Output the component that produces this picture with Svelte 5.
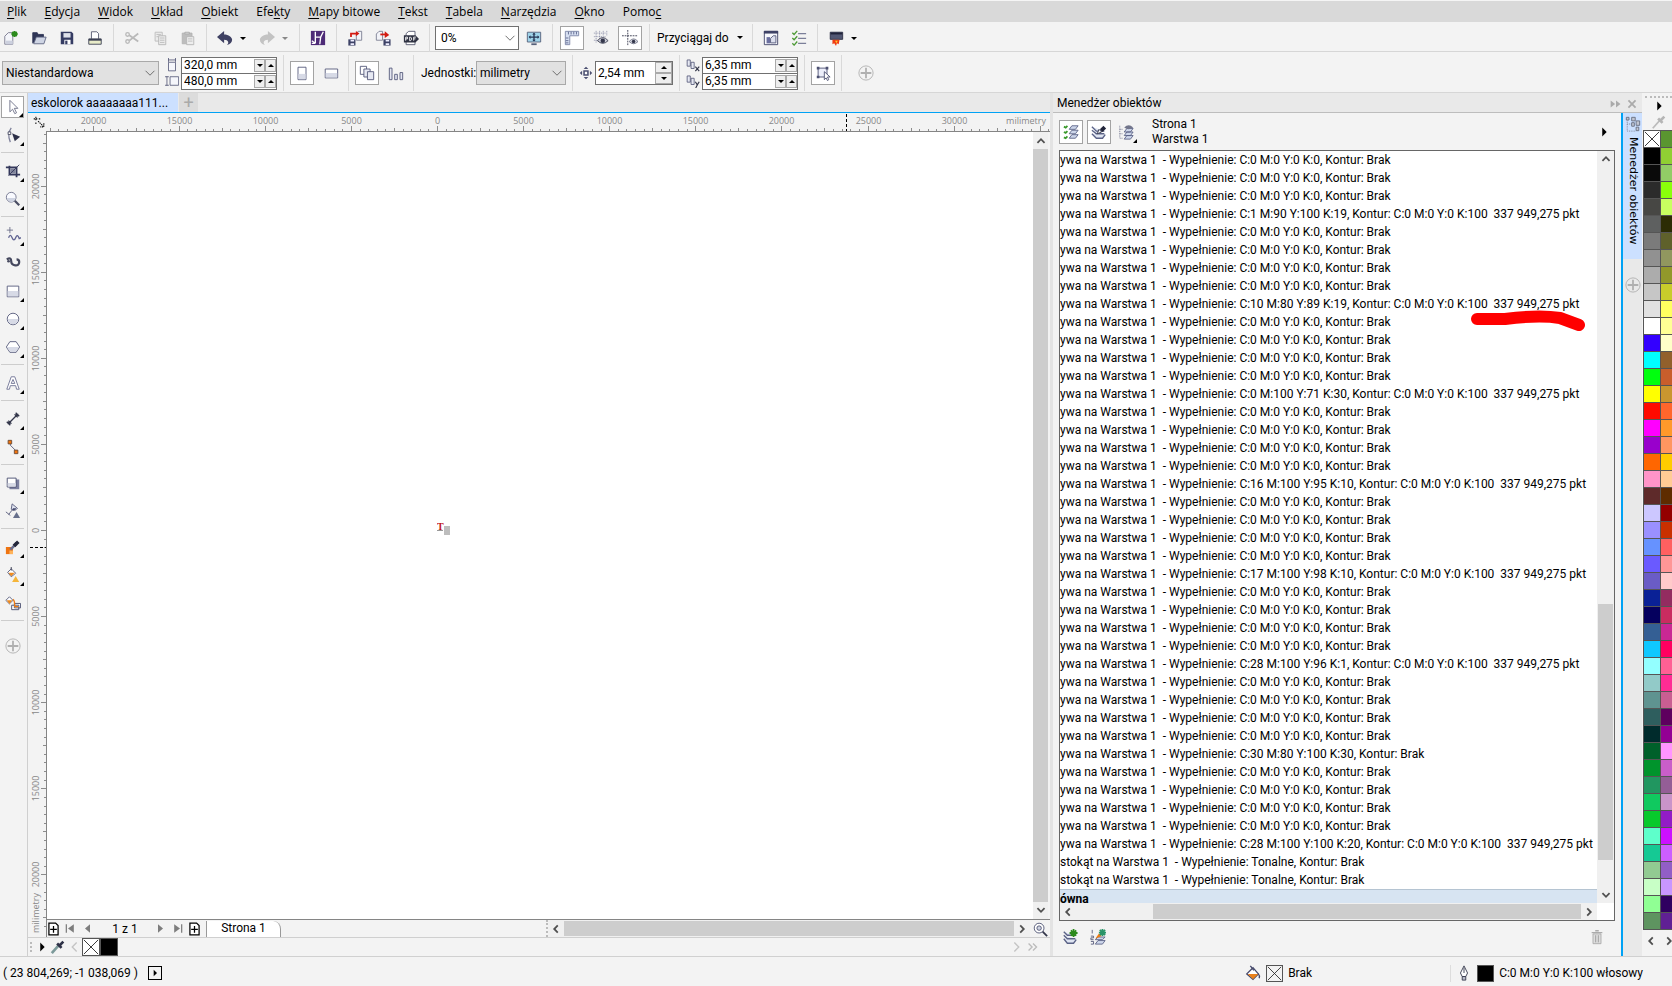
<script>
  // Main menu, the split marks the access key
  const menu = [
    ["", "P", "lik"],
    ["", "E", "dycja"],
    ["", "W", "idok"],
    ["", "U", "kład"],
    ["", "O", "biekt"],
    ["Efe", "k", "ty"],
    ["", "M", "apy bitowe"],
    ["", "T", "ekst"],
    ["", "T", "abela"],
    ["", "N", "arzędzia"],
    ["", "O", "kno"],
    ["Pomo", "c", ""]
  ];

  // Icon drawings on an 18x18 grid
  const icons = {
    new: '<path d="M2 16V7l4-4h5v13z" fill="#f4f5fa" stroke="#77778c"/><path d="M3 12h8v4H3z" fill="#ccd0de"/><path d="M13 1v7M9.5 4.500h7M10.500 2l5 5M15.500 2l-5 5" stroke="#2c8a1c" stroke-width="2"/>',
    open: '<path d="M2 15V3h5l1 2h6v3" fill="#2f3556" stroke="#2f3556"/><path d="M3 15.500L6 8h11l-2.500 7.500z" fill="#cfd5e4" stroke="#5c6380"/>',
    save: '<path d="M2 2h12l2 2v12H2z" fill="#353c63"/><path d="M5 3.500h8v5H5z" fill="#dfe2ec"/><path d="M6 11h7v5H6z" fill="#fff"/><path d="M7 12h2.500v4H7z" fill="#353c63"/>',
    print: '<path d="M5 10V2h6l2 2v6" fill="#fff" stroke="#55586f"/><path d="M2 10h14v6H2z" fill="#e9ecc9" stroke="#3c4055"/><path d="M2 10h14v2H2z" fill="#3c4055"/>',
    cut: '<path d="M16 4L6 12M16 13L6 6" stroke="#b9b9b9" stroke-width="2"/><circle cx="4" cy="5" r="2" fill="none" stroke="#b9b9b9" stroke-width="1.500"/><circle cx="4" cy="13" r="2" fill="none" stroke="#b9b9b9" stroke-width="1.500"/>',
    copy: '<path d="M3.500 2.500h8v10h-8z" fill="#ececec" stroke="#bbb"/><path d="M7.500 6.500h8v10h-8z" fill="#ececec" stroke="#b5b5b5"/><path d="M9 9h5M9 11.500h5M9 14h5M5 5h5M5 7.500h2" stroke="#bbb"/>',
    paste: '<path d="M2.500 3.500h11v12h-11z" fill="#bdbdbd" stroke="#b2b2b2"/><path d="M5.500 2.500h5v2h-5z" fill="#ddd" stroke="#aaa"/><path d="M7.500 7.500h8v9h-8z" fill="#eee" stroke="#b5b5b5"/><path d="M9 10h5M9 12.500h5" stroke="#bbb"/>',
    undo: '<path d="M8 1v4c5 0 9 3 9 6s-2 5-6 6c3-2 2-6-3-6v4L0 8z" fill="#3f4163"/>',
    redo: '<path d="M10 1v4c-5 0-9 3-9 6s2 5 6 6c-3-2-2-6 3-6v4l8-7z" fill="#c3c3c3"/>',
    connect: '<path d="M1 1h16v16H1z" fill="#4d2a77"/><path d="M6 2v6h6l3-6M12 8l-1 8M6 8v7M6 15l-4-3M2 15h4" fill="none" stroke="#fff" stroke-width="1.500"/>',
    import: '<path d="M1.500 10.500h8v7h-8z" fill="#3d4266"/><path d="M4 11h4v2H4zM4 15h4v2H4z" fill="#eef"/><path d="M10.500 11.500v-8l2-2h4v10z" fill="#f2f3f8" stroke="#7b7e92"/><path d="M4.500 8V4h7" fill="none" stroke="#d31b12" stroke-width="2"/><path d="M10 1l4 3-4 3z" fill="#d31b12"/>',
    export: '<path d="M1.500 11.500v-7l3-3h4v10z" fill="#f2f3f8" stroke="#7b7e92"/><path d="M9.500 10.500h8v7h-8z" fill="#3d4266"/><path d="M12 11h4v2h-4zM12 15h4v2h-4z" fill="#eef"/><path d="M6 5h6" stroke="#d31b12" stroke-width="2"/><path d="M11 1.500l5 4-5 3.500z" fill="#d31b12"/>',
    pdf: '<path d="M3.500 7V4l3-2.500h7V7M3.500 13v3.500h10V13" fill="#fff" stroke="#55586f"/><path d="M1 6h13l4 4-4 4H1z" fill="#2f3243"/><path d="M3 12V8h2v2H3M7.500 8v4h1l1-1V9l-1-1zM12 12V8h2.500M12 10h2" fill="none" stroke="#fff"/>',
    fit: '<path d="M1.500 2.500h15v11h-15z" fill="#9fd4ea" stroke="#55607a"/><path d="M6 16h6" stroke="#55607a" stroke-width="2"/><path d="M4 8h10M9 4v8" stroke="#263352" stroke-width="1.500"/><path d="M3 8l2-2v4zM15 8l-2-2v4zM9 3L7 5h4zM9 13l-2-2h4z" fill="#263352"/>',
    rulers: '<path d="M1.500 1.500h15v5h-10v10h-5z" fill="#d7e0f2" stroke="#7b84a5"/><path d="M5 2v3M8 2v3M11 2v3M14 2v3M2 9h3M2 12h3M2 14.500h3" stroke="#59628a"/>',
    grid: '<path d="M1 3.500h14M1 7.500h14M1 11.500h6M3.500 1v14M7.500 1v10M11.500 1v6M15.500 1v6" stroke="#8285a0" stroke-dasharray="1 1"/><path d="M5 12q6-7 12 0-6 6-12 0z" fill="#c9cbd6" stroke="#3e4052"/><circle cx="11" cy="12" r="2.500" fill="#33364a"/>',
    guides: '<path d="M0 6.500h18M6.500 0v18" stroke="#33364a" stroke-dasharray="2 1"/><path d="M8 13q5-6 10 0-5 5-10 0z" fill="#d5d7e0" stroke="#73768a"/><circle cx="13" cy="13" r="2" fill="#33364a"/>',
    options: '<path d="M1.500 1.500h15v15h-15z" fill="#f7f8fc" stroke="#3e4266"/><path d="M1 1h16v3H1z" fill="#3e4266"/><path d="M4 8h4v7H4z" fill="#6b6fa0"/><path d="M8.500 14.500v-5l3-3h3v8z" fill="#dde0ef" stroke="#55597a"/>',
    list: '<path d="M8 4h9M8 9.500h9M8 15h9" stroke="#7b7f99" stroke-width="1.500"/><path d="M1.500 3l2 2L7 1M1.500 9l2 2L7 7M1.500 15l2 2L7 13" fill="none" stroke="#4c9a35" stroke-width="1.500"/>',
    launch: '<path d="M2.500 2.500h14v8h-14z" fill="#525773" stroke="#2b2e44"/><path d="M3 3h13v2H3z" fill="#20233a"/><path d="M5 11l8 0-1 5-2-1-1 3-2-3-2 1z" fill="#f03c12"/><path d="M8 12h3l-1.500 3z" fill="#ffc62e"/>',
    width: '<path d="M4.500 5.500h9v11h-9z" fill="#f5f6fb" stroke="#4c5071"/><path d="M4 2.500h10M4.500 0v5M13.500 0v5" stroke="#4c5071"/>',
    height: '<path d="M6.500 3.500h11v11h-11z" fill="#f5f6fb" stroke="#4c5071"/><path d="M2.500 3v12M0 3.500h5M0 14.500h5" stroke="#4c5071"/>',
    portrait: '<path d="M4.500 2.500h9v14h-9z" fill="#fff" stroke="#55597a"/><path d="M5 10h8v6H5z" fill="#d7dae6"/>',
    landscape: '<path d="M2.500 4.500h14v10h-14z" fill="#fff" stroke="#55597a"/><path d="M3 9h13v5H3z" fill="#d7dae6"/>',
    pages: '<path d="M1.500 1.500h7v9h-7z" fill="#fff" stroke="#55597a"/><path d="M5.500 4.500h7v9h-7z" fill="#e7e9f3" stroke="#55597a"/><path d="M9.500 7.500h7v9h-7z" fill="#e7e9f3" stroke="#55597a"/>',
    bars: '<path d="M1.500 3.500h3v13h-3zM7.500 10.500h3v6h-3zM13.500 8.500h3v8h-3z" fill="#e4e6f1" stroke="#55597a"/>',
    nudge: '<path d="M6.500 6.500h5v5h-5z" fill="#fff" stroke="#4c5071" stroke-width="2"/><path d="M9 1l3 3H6zM9 17l3-3H6zM1 9l3-3v6zM17 9l-3-3v6z" fill="#4c5071"/>',
    dupX: '<path d="M1.500 2.500h4v8h-4zM6.500 5.500h4v8h-4z" fill="#e7e9f3" stroke="#4c5071"/><path d="M12 11l5 6M17 11l-5 6" stroke="#33364a" stroke-width="1.500"/>',
    dupY: '<path d="M1.500 2.500h4v8h-4zM6.500 5.500h4v8h-4z" fill="#e7e9f3" stroke="#4c5071"/><path d="M12 10l2.500 4L17 10M14.500 14l-2 4" fill="none" stroke="#33364a" stroke-width="1.500"/>',
    treat: '<path d="M3.500 3.500h10v10h-10z" fill="#eceefa" stroke="#4c5071"/><path d="M2 2h3v3H2zM12 2h3v3h-3zM2 12h3v3H2z" fill="#4c5071"/><path d="M10.500 7.500v9l2-2 1.500 3 1.500-1-1.500-3h3z" fill="#fff" stroke="#4c5071"/>',
    plus: '<circle cx="9" cy="9" r="8" fill="none" stroke="#b0b0b0"/><path d="M9 3v12M3 9h12" stroke="#b0b0b0" stroke-width="2"/>',
    pick: '<path d="M5.500 1.500v13l3-3 2.500 5 2-1-2.500-5h4z" fill="#fff" stroke="#6a6d85"/>',
    shape: '<path d="M7 1Q2 8 6 17" fill="none" stroke="#7f829b" stroke-width="1.500"/><path d="M3.500 5.500h3v3h-3z" fill="#fff" stroke="#44475e"/><path d="M8 7l9 4-6 5z" fill="#2d3048"/>',
    crop: '<path d="M5 3v10h12M1 5h12v11" fill="none" stroke="#33375a" stroke-width="2"/><path d="M6 6h6v6H6z" fill="#7d8199"/><path d="M4 14L16 2" stroke="#33375a"/>',
    zoom: '<circle cx="7" cy="7" r="5.500" fill="#f9faff" stroke="#6c708a"/><path d="M2 8h10q-2 5-5 4.500T2 8z" fill="#cfd4e2"/><path d="M11 11l5 5" stroke="#4a4d63" stroke-width="2.500"/>',
    freehand: '<path d="M5.500 0v7M2 3.500h7" stroke="#6c708a"/><path d="M4 12q2-5 4 0t4 0 4 1l2-1" fill="none" stroke="#5f6391" stroke-width="1.500"/>',
    artistic: '<path d="M2 5q5-3 5 2c0 5 9 7 9 1q0-3-3-3" fill="none" stroke="#45485e" stroke-width="2.500"/><circle cx="4" cy="7" r="1.500" fill="#45485e"/>',
    rect: '<path d="M2.500 3.500h13v12h-13z" fill="#fff" stroke="#55597a"/><path d="M3 9h12v6H3z" fill="#d7dae6"/>',
    ellipse: '<circle cx="9" cy="9" r="6.500" fill="#fff" stroke="#55597a"/><path d="M3 9h12q-1 6-6 6T3 9z" fill="#d7dae6"/>',
    polygon: '<path d="M5.500 3h7l4 6-4 6h-7l-4-6z" fill="#fff" stroke="#55597a"/><path d="M2 9h14l-4 5.500H6z" fill="#d7dae6"/>',
    text: '<path d="M2 16L7 2h4l5 14h-3l-1-4H6l-1 4z" fill="#fff" stroke="#6d7193"/><path d="M7 9.500L9 5l2 4.500z" fill="#fff" stroke="#6d7193"/>',
    dimension: '<path d="M4 14L14 4M2 12l4 4M12 2l4 4" stroke="#33364a" stroke-width="1.500"/><path d="M3 15l1-5 4 4zM15 3l-1 5-4-4z" fill="#33364a"/>',
    connector: '<path d="M6 4v3l6 6v2" fill="none" stroke="#55597a"/><path d="M3.500 1.500h4v4h-4zM10.500 12.500h4v4h-4z" fill="#f2740b" stroke="#684a3a"/>',
    shadow: '<path d="M5 5h11v11H5z" fill="#7c80a0"/><path d="M2.500 3.500h10v10h-10z" fill="#fff" stroke="#44486b"/><path d="M3 9h9v4H3z" fill="#d7dae6"/>',
    transparency: '<path d="M8 1l6 5q-3 4-7 1zM8 8l-4 5M1 10l5 4" fill="#dfe3f0" stroke="#55597a"/><path d="M9 6h4q-2 3-5 2z" fill="#44486b"/><path d="M13 10l4 7H9z" fill="#67708c"/>',
    dropper: '<path d="M1 9h8v8H1z" fill="#ef7411"/><path d="M1 13h4v4h4v-4" fill="#ffb35a"/><path d="M6 12l6-6" stroke="#6c6f8e" stroke-width="3"/><path d="M10 5l3 3M12 6l3-3" stroke="#25283c" stroke-width="4"/>',
    fill: '<path d="M3 6l4-4 5 5-5 4z" fill="#fff" stroke="#55597a"/><path d="M4 6.500h7l-4 4z" fill="#ee8a1d"/><path d="M7 0v4" stroke="#33364a"/><path d="M12 10l4 7H8z" fill="#f5b53a"/>',
    smart: '<path d="M1 6l4-4 4 4-4 4z" fill="#fff" stroke="#55597a"/><path d="M2 6h6l-3 4z" fill="#ee8a1d"/><path d="M10.500 9.500h7v5h-7zM7.500 11.500h8v5h-8z" fill="#fff" stroke="#44486b"/><path d="M9 5q2 1 2 8h4" fill="none" stroke="#ee7a11" stroke-width="1.500"/>',
    layersCheck: '<path d="M10 2h7l-3 4H7zM10 7h7l-3 4H7zM10 12h7l-3 4H7z" fill="#cdd6ea" stroke="#5a6286"/><path d="M1 3l2 1 2-2M1 9l2 1 2-2M1 15l2 1 2-2" fill="none" stroke="#3b9a2c" stroke-width="2"/>',
    layersEdit: '<path d="M1 3l5 5h9M1 7l5 4h9M1 11l5 5h7l3-4" fill="#dfe5f2" stroke="#5a6286" stroke-width="1.500"/><path d="M7 11l2-5 3 3z" fill="#fff" stroke="#33364a"/><path d="M10 6l4-4 3 3-4 4z" fill="#22253a"/>',
    layersView: '<path d="M2 2v14h4M2 6h4M2 11h4" fill="none" stroke="#6a6e88" stroke-dasharray="1 1"/><path d="M10 5h7l-3 4H7zM10 9h7l-3 4H7zM10 13h7l-3 4H7z" fill="#cdd6ea" stroke="#5a6286"/><path d="M7 4q5-5 10 0-5 4-10 0z" fill="#72758b"/>',
    layerNew: '<path d="M2 3l4 4h9M2 7l4 4h9M2 11l4 5h7l3-4" fill="#dfe5f2" stroke="#5a6286" stroke-width="1.500"/><path d="M13 0v9M8.500 4.500h9M10 1.500l6 6M16 1.500l-6 6" stroke="#2c8a1c" stroke-width="2"/>',
    layerMaster: '<path d="M9 9h8l-3 3H6zM9 13h8l-3 4H6z" fill="#cdd6ea" stroke="#5a6286"/><path d="M2.500 1v4M1 8h3v2H1v2h3M1 14h3v3H1" fill="none" stroke="#55597a"/><path d="M6 11l4-6 3 3z" fill="#ee7a11"/><path d="M14 0v8M10 4h8M11 1l6 6M17 1l-6 6" stroke="#2a9468" stroke-width="2"/>',
    trash: '<path d="M4.500 5.500h9v11h-9z" fill="#ddd" stroke="#aaa"/><path d="M3 4h12M7 2h4" stroke="#aaa" stroke-width="1.500"/><path d="M7.500 7v8M10.500 7v8" stroke="#999"/>',
    pipette: '<path d="M2 16l8-9" stroke="#7c9a9a" stroke-width="3"/><path d="M8 5l5 5M11 7l4-4" stroke="#2e3147" stroke-width="3"/>',
    pipetteOff: '<path d="M2 16l8-9" stroke="#bbb" stroke-width="2"/><path d="M8 5l5 5M11 7l4-4" stroke="#b5b5b5" stroke-width="3"/>',
    tree: '<path d="M2.500 5v12h9M2.500 9h5" fill="none" stroke="#777d92" stroke-dasharray="1 1"/><path d="M1.500 1.500h3v3h-3zM7.500 1.500h4v4h-4zM12.500 5.500h4v5h-4zM7.500 7.500h3v4h-3zM12.500 12.500h3v4h-3z" fill="#c2c6d2" stroke="#666c80"/>',
    bucket: '<path d="M2 10l7-7 6 7-6 6z" fill="#fff" stroke="#44486b" stroke-width="1.500"/><path d="M3 10h12l-6 6z" fill="#e9811c"/><path d="M6 1l4 5M15 10q2 2 1 5" fill="none" stroke="#44486b" stroke-width="1.500"/>',
    pen: '<path d="M9 1l4 8-2 4H7L5 9z" fill="#fff" stroke="#33364a"/><path d="M9 3v6M7 13h4v4H7z" fill="#b9bcc9" stroke="#33364a"/>',
    pageAdd: '<path d="M3.500 2.500h8l3 3v11h-11z" fill="#fff" stroke="#000" stroke-width="1.500"/><path d="M9 6v8M5 10h8" stroke="#000" stroke-width="1.500"/>',
    first: '<path d="M4 4v10" stroke="#7d7d7d" stroke-width="1.500"/><path d="M13 4v10L6 9z" fill="#7d7d7d"/>',
    prev: '<path d="M12 4v10L6 9z" fill="#7d7d7d"/>',
    next: '<path d="M6 4v10l6-5z" fill="#7d7d7d"/>',
    last: '<path d="M14 4v10" stroke="#7d7d7d" stroke-width="1.500"/><path d="M5 4v10l7-5z" fill="#7d7d7d"/>',
    navigator: '<circle cx="8" cy="8" r="5.500" fill="#fff" stroke="#4c5071"/><circle cx="8" cy="8" r="2.500" fill="#cfd4e2" stroke="#4c5071"/><path d="M12 12l5 5" stroke="#33364a" stroke-width="2"/>',
    up: '<path d="M5 11l4-4 4 4" fill="none" stroke="#505050" stroke-width="2"/>',
    down: '<path d="M5 7l4 4 4-4" fill="none" stroke="#505050" stroke-width="2"/>',
    left: '<path d="M11 5L7 9l4 4" fill="none" stroke="#505050" stroke-width="2"/>',
    right: '<path d="M7 5l4 4-4 4" fill="none" stroke="#505050" stroke-width="2"/>',
    leftOff: '<path d="M12 4L7 9l5 5" fill="none" stroke="#c4c4c4" stroke-width="1.500"/>',
    rightOff: '<path d="M6 4l5 5-5 5" fill="none" stroke="#c4c4c4" stroke-width="1.500"/>',
    endOff: '<path d="M4 5l4 4-4 4M9 5l4 4-4 4" fill="none" stroke="#bbb" stroke-width="1.500"/>',
    play: '<path d="M7 4v10l5-5z" fill="#000"/>',
    forward: '<path d="M3 5v8l5-4zM9 5v8l5-4z" fill="#aaa"/>',
    close: '<path d="M5 5l8 8M13 5l-8 8" stroke="#aaa" stroke-width="2"/>',
    origin: '<path d="M1 4h5M4 1v6M8 4h3M4 9v3M7 7l8 8M15 10v5h-5" fill="none" stroke="#111" stroke-width="1.500" stroke-dasharray="2 1"/>',
    chevron: '<path d="M4 6.500l5 5 5-5" fill="none" stroke="#606060"/>',
    noColor: '<path d="M1 1l16 16M17 1L1 17" stroke="#222"/>'
  };

  const standardTools = [
    { icon: "new", label: "Nowy" },
    { icon: "open", label: "Otwórz" },
    { icon: "save", label: "Zapisz" },
    { icon: "print", label: "Drukuj" },
    { sep: true },
    { icon: "cut", label: "Wytnij" },
    { icon: "copy", label: "Kopiuj" },
    { icon: "paste", label: "Wklej" },
    { sep: true },
    { icon: "undo", label: "Cofnij" },
    { caret: true },
    { icon: "redo", label: "Ponów" },
    { caret: true, off: true },
    { sep: true },
    { icon: "connect", label: "Zawartość" },
    { sep: true },
    { icon: "import", label: "Importuj" },
    { icon: "export", label: "Eksportuj" },
    { icon: "pdf", label: "Publikuj" },
    { sep: true }
  ];

  const viewTools = [
    { icon: "fit", label: "Pełny ekran" },
    { sep: true },
    { icon: "rulers", label: "Linijki", on: true },
    { icon: "grid", label: "Siatka" },
    { icon: "guides", label: "Prowadnice", on: true },
    { sep: true }
  ];

  const endTools = [
    { sep: true },
    { icon: "options", label: "Ekran" },
    { icon: "list", label: "Opcje" },
    { sep: true },
    { icon: "launch", label: "Uruchom" },
    { caret: true }
  ];

  const toolbox = [
    { icon: "pick", on: true, more: true },
    { icon: "shape", more: true },
    null,
    { icon: "crop", more: true },
    { icon: "zoom", more: true },
    null,
    { icon: "freehand", more: true },
    { icon: "artistic" },
    { icon: "rect", more: true },
    { icon: "ellipse", more: true },
    { icon: "polygon", more: true },
    null,
    { icon: "text", more: true },
    null,
    { icon: "dimension", more: true },
    { icon: "connector", more: true },
    null,
    { icon: "shadow", more: true },
    { icon: "transparency" },
    null,
    { icon: "dropper", more: true },
    { icon: "fill", more: true },
    { icon: "smart" },
    null
  ];

  // Objects on the layer; rows not listed here have a plain white fill
  const outline = "C:0 M:0 Y:0 K:100  337 949,275 pkt";
  const special = {
    3: ["C:1 M:90 Y:100 K:19", outline],
    8: ["C:10 M:80 Y:89 K:19", outline],
    13: ["C:0 M:100 Y:71 K:30", outline],
    18: ["C:16 M:100 Y:95 K:10", outline],
    23: ["C:17 M:100 Y:98 K:10", outline],
    28: ["C:28 M:100 Y:96 K:1", outline],
    33: ["C:30 M:80 Y:100 K:30", "Brak"],
    38: ["C:28 M:100 Y:100 K:20", outline]
  };

  const objects = Array.from({ length: 41 }, (_, i) => {
    const [fill, stroke] = special[i] ?? [i > 38 ? "Tonalne" : "C:0 M:0 Y:0 K:0", "Brak"];
    const name = i > 38 ? "stokąt" : "ywa";
    return `${name} na Warstwa 1  - Wypełnienie: ${fill}, Kontur: ${stroke}`;
  });

  const leftColors =
    "fff 000 0a0a0a 2b2b2b 474744 5e6060 7b7b7b 919191 acacac c6c6c6 e1e1e1 fff 3300ff 00ffff 00ff0e ffff00 ff0a00 ff00ff 9900cc ff6600 ff94c8 5e2a2a ccc7ff 9a90ff 6692ff 6a5aff 6a5cc6 0a2196 05005e 345f94 0fc8ff 93ffff 92cac8 5f9390 2e5e5e 002b2c 00602a 00942c 219660 10c95f 08c92c 5effcb 15c994 92ca92 c8ffc6 90ff94 5e9460".split(" ");
  const rightColors =
    "5a9630 90cf33 92cc66 8aff0a c8ff60 2c2c04 5f612b 91975f 92982b c8cc2b ffff60 ffff94 ffffc8 92602c c85e2c c9962f ff662c ff992a ff9660 ffcc00 ffcb94 5e2c00 930000 c93000 ff6060 ff9696 ffcaca 932c60 c92c60 c92894 ff0060 ff6094 ff2c94 c95e92 5e005e 930094 ff94ff c95ec9 945e96 c994c9 921cc6 cc10ff cc5eff 925ec6 c896ff 2f0060 602094".split(" ");

  // Ruler marks, one every 500 mm
  const step = 8.61;
  const makeTicks = (zero, from, to) => {
    const ticks = [];
    for (let i = from; i <= to; i++) {
      ticks.push({
        pos: Math.round(zero + i * step) + 0.5,
        size: i % 10 === 0 ? 5 : i % 5 === 0 ? 3 : 2,
        label: i % 10 === 0 ? String(Math.abs(i) * 500) : ""
      });
    }
    return ticks;
  };
  const ticksX = makeTicks(391, -45, 72);
  const ticksY = makeTicks(398, -46, 46);

  let pageWidth = $state("320,0 mm");
  let pageHeight = $state("480,0 mm");
  let nudge = $state("2,54 mm");
  let dupX = $state("6,35 mm");
  let dupY = $state("6,35 mm");
</script>

{#snippet icon(name)}
  <svg class="icon" viewBox="0 0 18 18" aria-hidden="true">{@html icons[name]}</svg>
{/snippet}

{#snippet tools(items)}
  {#each items as item}
    {#if item.sep}
      <span class="sep"></span>
    {:else if item.caret}
      <button class="caret-button" class:off={item.off} aria-label="Więcej"><span class="caret"></span></button>
    {:else}
      <button class="tool" class:on={item.on} aria-label={item.label}>{@render icon(item.icon)}</button>
    {/if}
  {/each}
{/snippet}

{#snippet sideSteps()}
  <span class="steps">
    <button aria-label="Mniej"><span class="caret small"></span></button>
    <button aria-label="Więcej"><span class="caret small up"></span></button>
  </span>
{/snippet}

<div class="app">
  <nav class="menu">
    {#each menu as [before, key, after]}
      <button>{before}<u>{key}</u>{after}</button>
    {/each}
  </nav>

  <div class="toolbar standard">
    {@render tools(standardTools)}
    <span class="combo zoom-level">
      <select aria-label="Powiększenie"><option>0%</option></select>
      {@render icon("chevron")}
    </span>
    {@render tools(viewTools)}
    <button class="snap">Przyciągaj do <span class="caret"></span></button>
    {@render tools(endTools)}
  </div>

  <div class="toolbar property">
    <span class="combo preset">
      <select aria-label="Rozmiar strony"><option>Niestandardowa</option></select>
      {@render icon("chevron")}
    </span>
    <div class="pair-icons">{@render icon("width")}{@render icon("height")}</div>
    <div class="pair">
      <div><input aria-label="Szerokość" bind:value={pageWidth} />{@render sideSteps()}</div>
      <div><input aria-label="Wysokość" bind:value={pageHeight} />{@render sideSteps()}</div>
    </div>
    <span class="sep"></span>
    <button class="tool on" aria-label="Pionowo">{@render icon("portrait")}</button>
    <button class="tool" aria-label="Poziomo">{@render icon("landscape")}</button>
    <span class="sep"></span>
    <button class="tool on" aria-label="Wszystkie strony">{@render icon("pages")}</button>
    <button class="tool" aria-label="Bieżąca strona">{@render icon("bars")}</button>
    <span class="sep"></span>
    <label class="units" for="units">Jednostki:</label>
    <span class="combo unit">
      <select id="units"><option>milimetry</option></select>
      {@render icon("chevron")}
    </span>
    <span class="sep"></span>
    <div class="pair-icons">{@render icon("nudge")}</div>
    <div class="spinner">
      <input aria-label="Odległość przesunięcia" bind:value={nudge} />
      <span class="stack">
        <button aria-label="Więcej"><span class="caret small up"></span></button>
        <button aria-label="Mniej"><span class="caret small"></span></button>
      </span>
    </div>
    <span class="sep"></span>
    <div class="pair-icons">{@render icon("dupX")}{@render icon("dupY")}</div>
    <div class="pair">
      <div><input aria-label="Odległość X" bind:value={dupX} />{@render sideSteps()}</div>
      <div><input aria-label="Odległość Y" bind:value={dupY} />{@render sideSteps()}</div>
    </div>
    <span class="sep"></span>
    <button class="tool on" aria-label="Traktuj jako wypełnione">{@render icon("treat")}</button>
    <span class="sep"></span>
    <button class="tool customize" aria-label="Dostosuj">{@render icon("plus")}</button>
  </div>

  <div class="workspace">
    <div class="toolbox">
      {#each toolbox as tool}
        {#if tool}
          <button class="tool" class:on={tool.on} class:more={tool.more} aria-label={tool.icon}>
            {@render icon(tool.icon)}
          </button>
        {:else}
          <span class="line"></span>
        {/if}
      {/each}
      <button class="tool add" aria-label="Dostosuj">{@render icon("plus")}</button>
    </div>

    <main class="document">
      <div class="doc-tabs">
        <button class="doc-tab">eskolorok aaaaaaaa111...</button>
        <button class="doc-new" aria-label="Nowy dokument">+</button>
      </div>

      <div class="view">
        <div class="corner">{@render icon("origin")}</div>
        <svg class="ruler-x">
          {#each ticksX as tick}
            <path d="M{tick.pos} {18 - tick.size}v{tick.size}" />
            {#if tick.label && tick.label !== "35000"}
              <text x={tick.pos} y="11" text-anchor="middle">{tick.label}</text>
            {/if}
          {/each}
          <text x="100%" dx="-4" y="11" text-anchor="end">milimetry</text>
          <path class="pointer" d="M800.5 1v18" />
        </svg>
        <svg class="ruler-y">
          {#each ticksY as tick}
            <path d="M{18 - tick.size} {tick.pos}h{tick.size}" />
            {#if tick.label}
              <text transform="translate(11 {tick.pos}) rotate(-90)" text-anchor="middle">{tick.label}</text>
            {/if}
          {/each}
          <svg y="100%" overflow="visible">
            <text transform="translate(11 -4) rotate(-90)">milimetry</text>
          </svg>
          <path class="pointer" d="M2 415.5h16" />
        </svg>

        <div class="canvas">
          <svg class="artwork" viewBox="0 0 14 14">
            <path d="M7 5h6v9H7z" fill="#bdbdbd" />
            <path d="M0 9.500h6" stroke="#999" />
            <text x="0" y="9">T</text>
          </svg>
        </div>
        <div class="scroll-y">
          {@render icon("up")}
          <div class="thumb"></div>
          {@render icon("down")}
        </div>

        <div class="pages">
          <div class="page-nav">
            <button aria-label="Dodaj stronę">{@render icon("pageAdd")}</button>
            <button aria-label="Pierwsza strona">{@render icon("first")}</button>
            <button aria-label="Poprzednia strona">{@render icon("prev")}</button>
            <span class="count">1 z 1</span>
            <button aria-label="Następna strona">{@render icon("next")}</button>
            <button aria-label="Ostatnia strona">{@render icon("last")}</button>
            <button aria-label="Dodaj stronę na końcu">{@render icon("pageAdd")}</button>
            <button class="page-tab">Strona 1</button>
          </div>
          <div class="scroll-x">
            {@render icon("left")}
            <div class="thumb"></div>
            {@render icon("right")}
          </div>
          <button class="navigator" aria-label="Nawigator">{@render icon("navigator")}</button>
        </div>
      </div>

      <div class="doc-palette">
        <span class="grip"></span>
        {@render icon("play")}
        {@render icon("pipette")}
        {@render icon("leftOff")}
        <span class="swatches">
          <button class="swatch" aria-label="Brak koloru">{@render icon("noColor")}</button>
          <button class="swatch black" aria-label="Czarny"></button>
        </span>
        <span class="spacer"></span>
        {@render icon("rightOff")}
        {@render icon("endOff")}
      </div>
    </main>

    <aside class="docker">
      <header class="docker-title">
        <span>Menedżer obiektów</span>
        <button aria-label="Zwiń">{@render icon("forward")}</button>
        <button aria-label="Zamknij">{@render icon("close")}</button>
      </header>
      <div class="docker-body">
        <section class="manager">
          <div class="manager-head">
            <button class="tool on" aria-label="Pokaż właściwości">{@render icon("layersCheck")}</button>
            <button class="tool on" aria-label="Edytuj warstwy">{@render icon("layersEdit")}</button>
            <button class="tool more" aria-label="Widok warstw">{@render icon("layersView")}</button>
            <div class="active-layer">
              <div>Strona 1</div>
              <div>Warstwa 1</div>
            </div>
            <button class="tool" aria-label="Opcje">{@render icon("play")}</button>
          </div>

          <div class="object-list">
            <ul>
              {#each objects as object, i}
                <li>
                  {object}
                  {#if i === 8}
                    <svg class="mark" viewBox="0 0 120 26">
                      <path d="M9 10h28C60 7 80 7 92 9L111 16" />
                    </svg>
                  {/if}
                </li>
              {/each}
              <li class="master">ówna</li>
            </ul>
            <div class="scroll-y">
              {@render icon("up")}
              <div class="thumb"></div>
              {@render icon("down")}
            </div>
            <div class="scroll-x">
              {@render icon("left")}
              <div class="thumb"></div>
              {@render icon("right")}
            </div>
          </div>

          <div class="manager-foot">
            <button class="tool" aria-label="Nowa warstwa">{@render icon("layerNew")}</button>
            <button class="tool" aria-label="Nowa warstwa główna">{@render icon("layerMaster")}</button>
            <span class="spacer"></span>
            <button class="tool" aria-label="Usuń">{@render icon("trash")}</button>
          </div>
        </section>

        <div class="docker-tabs">
          <button class="docker-tab">{@render icon("tree")}<span>Menedżer obiektów</span></button>
          <button class="tool" aria-label="Dodaj okno">{@render icon("plus")}</button>
        </div>
      </div>
    </aside>

    <div class="palette">
      <span class="palette-grip"></span>
      {@render icon("play")}
      {@render icon("pipetteOff")}
      <div class="columns">
        <div class="column">
          {#each leftColors as color, i}
            <button style="background: #{color}" aria-label="#{color}">
              {#if i === 0}{@render icon("noColor")}{/if}
            </button>
          {/each}
        </div>
        <div class="column">
          {#each rightColors as color}
            <button style="background: #{color}" aria-label="#{color}"></button>
          {/each}
        </div>
      </div>
      <div class="palette-nav">{@render icon("left")}{@render icon("right")}</div>
    </div>
  </div>

  <footer class="status">
    <span class="coords">( 23 804,269; -1 038,069 )</span>
    <button class="status-play" aria-label="Szczegóły">{@render icon("play")}</button>
    <div class="status-fill">
      {@render icon("bucket")}
      <span class="chip">{@render icon("noColor")}</span>
      <span>Brak</span>
    </div>
    <div class="status-outline">
      {@render icon("pen")}
      <span class="chip black"></span>
      <span>C:0 M:0 Y:0 K:100 włosowy</span>
    </div>
  </footer>
</div>

<style>
  :global(body) {
    margin: 0;
  }

  .app {
    display: flex;
    flex-direction: column;
    height: 100vh;
    overflow: hidden;
    background: #f3f3f3;
    color: #000;
    font: 12px/16px Roboto, "Open Sans", sans-serif;
  }

  .app * {
    box-sizing: border-box;
  }

  button,
  input,
  select {
    margin: 0;
    padding: 0;
    border: 0;
    background: none;
    color: inherit;
    font: inherit;
  }

  .icon {
    display: block;
    flex: none;
    width: 16px;
    height: 16px;
    fill: none;
  }

  .spacer {
    flex: 1;
  }

  .caret {
    display: inline-block;
    border: 3px solid transparent;
    border-top-color: #000;
    border-bottom: 0;
  }

  .caret.up {
    border-top: 0;
    border-bottom: 3px solid #000;
  }

  .off .caret {
    border-top-color: #888;
  }

  /* Menu and toolbars */
  .menu {
    display: flex;
    flex: none;
    height: 22px;
    border-top: 1px solid #f5f5f5;
    background: #d9d9d9;
    font-family: "Open Sans", "Noto Sans", sans-serif;
  }

  .menu button {
    padding: 0 9px;
  }

  .menu button:first-child {
    padding-left: 7px;
  }

  .menu u {
    text-underline-offset: 2px;
  }

  .toolbar {
    display: flex;
    flex: none;
    align-items: center;
    gap: 6px;
    padding-top: 2px;
    border-bottom: 1px solid #d6d6d6;
  }

  .standard {
    height: 30px;
  }

  .property {
    height: 41px;
    padding-left: 2px;
  }

  .tool {
    display: flex;
    flex: none;
    align-items: center;
    justify-content: center;
    width: 22px;
    height: 22px;
  }

  .tool.on {
    width: 24px;
    height: 24px;
    border: 1px solid #a3a3a3;
    background: #fff;
  }

  .caret-button {
    width: 14px;
    height: 22px;
    margin-left: -6px;
    line-height: 0;
  }

  .sep {
    flex: none;
    width: 1px;
    height: 28px;
    margin: 0 1px;
    background: #d9d9d9;
  }

  .property .sep {
    height: 36px;
    margin: 0;
  }

  .combo {
    position: relative;
    flex: none;
    height: 24px;
  }

  .combo select {
    width: 100%;
    height: 100%;
    padding-left: 3px;
    border: 1px solid #a9a9a9;
    border-radius: 0;
    appearance: none;
    background: #e1e1e1;
  }

  .combo .icon {
    position: absolute;
    top: 4px;
    right: 1px;
    pointer-events: none;
  }

  .zoom-level {
    width: 84px;
    margin: 0 -2px;
  }

  .zoom-level select {
    padding-left: 5px;
    border-color: #707070;
    background: #fff;
  }

  .snap {
    display: flex;
    align-items: center;
    gap: 8px;
    width: 88px;
    white-space: nowrap;
  }

  .preset {
    width: 157px;
  }

  .unit {
    width: 90px;
    margin-left: -4px;
  }

  .units {
    width: 54px;
    padding-left: 1px;
    white-space: nowrap;
  }

  .pair-icons {
    display: flex;
    flex-direction: column;
    gap: 2px;
  }

  .pair-icons .icon {
    width: 14px;
    height: 14px;
  }

  .pair {
    width: 96px;
    margin-left: -4px;
    border: 1px solid #707070;
    background: #fff;
  }

  .pair > div {
    display: flex;
    align-items: center;
    height: 15px;
  }

  .pair > div + div {
    height: 16px;
    border-top: 1px solid #707070;
  }

  .pair input {
    width: 72px;
    height: 15px;
    padding-left: 2px;
  }

  .steps {
    display: flex;
  }

  .steps button,
  .stack button {
    display: flex;
    align-items: center;
    justify-content: center;
    width: 11px;
    height: 13px;
    border: 1px solid #aaa;
    background: #eee;
  }

  .spinner {
    display: flex;
    width: 78px;
    height: 24px;
    margin-left: -4px;
    border: 1px solid #707070;
    background: #fff;
  }

  .spinner input {
    flex: 1;
    width: 0;
    padding-left: 2px;
  }

  .stack button {
    width: 17px;
    height: 11px;
  }

  .customize {
    margin-left: 7px;
  }

  /* Toolbox */
  .workspace {
    display: flex;
    flex: 1;
    min-height: 0;
  }

  .toolbox {
    display: flex;
    flex: none;
    flex-direction: column;
    align-items: center;
    gap: 6px;
    width: 28px;
    padding: 3px 2px 0 0;
    border-right: 1px solid #cfcfcf;
  }

  .toolbox .tool {
    width: 23px;
    height: 22px;
  }

  .toolbox .line {
    flex: none;
    width: 23px;
    height: 1px;
    margin: 0 0 1px;
    background: #cdcdcd;
  }

  .toolbox .add {
    margin-top: 7px;
  }

  .more {
    position: relative;
  }

  .more::after {
    content: "";
    position: absolute;
    right: 0;
    bottom: 0;
    border: 2px solid #000;
    border-top-color: transparent;
    border-left-color: transparent;
  }

  /* Document window */
  .document {
    display: flex;
    flex: 1;
    flex-direction: column;
    min-width: 0;
  }

  .doc-tabs {
    display: flex;
    flex: none;
    gap: 1px;
    height: 20px;
    border-bottom: 1px solid #00a2f5;
    background: #e9e9e9;
  }

  .doc-tab {
    width: 150px;
    padding-left: 3px;
    background: #cce0ff;
    text-align: left;
    white-space: nowrap;
  }

  .doc-new {
    width: 19px;
    background: #dcdcdc;
    color: #aaa;
    font-size: 18px;
  }

  .view {
    display: grid;
    flex: 1;
    grid-template-columns: 18px 1fr 17px;
    grid-template-rows: 19px 1fr 18px;
    min-height: 0;
  }

  .corner {
    padding: 3px 0 0 5px;
  }

  .corner .icon {
    width: 13px;
    height: 13px;
  }

  .ruler-x {
    grid-column: 2 / 4;
    width: 100%;
    height: 19px;
    border-bottom: 1px solid #858585;
  }

  .ruler-y {
    grid-row: 2 / 4;
    width: 19px;
    height: 100%;
    border-right: 1px solid #858585;
  }

  .ruler-x path,
  .ruler-y path {
    stroke: #8c8c8c;
  }

  .view .pointer {
    stroke: #000;
    stroke-dasharray: 3 2;
  }

  .ruler-x text,
  .ruler-y text {
    fill: #888;
    font-family: "Open Sans", "Noto Sans", sans-serif;
    font-size: 9px;
  }

  .canvas {
    position: relative;
    border-left: 1px solid #858585;
    background: #fff;
  }

  .artwork {
    position: absolute;
    top: 389px;
    left: 390px;
    width: 14px;
    height: 14px;
  }

  .artwork text {
    fill: #c0161c;
    font: bold 10px "Liberation Serif", serif;
  }

  .scroll-y,
  .scroll-x {
    display: flex;
    align-items: center;
    background: #f0f0f0;
  }

  .scroll-y {
    flex-direction: column;
    width: 15px;
  }

  .thumb {
    background: #cdcdcd;
  }

  .scroll-y .thumb {
    flex: 1;
    width: 15px;
  }

  .scroll-x .thumb {
    flex: 1;
    height: 15px;
  }

  .view > .scroll-y {
    padding: 1px 0;
  }

  .pages {
    display: flex;
    grid-column: 2 / 4;
    min-width: 0;
    border-top: 1px solid #858585;
  }

  .page-nav {
    display: flex;
    align-items: center;
    width: 50%;
    border-right: 2px dotted #bbb;
  }

  .page-nav button {
    width: 17px;
  }

  .page-nav button .icon {
    width: 15px;
    height: 15px;
  }

  .count {
    width: 56px;
    text-align: center;
  }

  .page-nav .page-tab {
    width: 75px;
    height: 16px;
    margin-left: 2px;
    border-right: 1px solid #999;
    border-left: 1px solid #999;
    border-top-right-radius: 8px;
    background: #fff;
    line-height: 15px;
  }

  .pages .scroll-x {
    flex: 1;
  }

  .navigator {
    width: 20px;
    padding-left: 2px;
  }

  .doc-palette {
    display: flex;
    flex: none;
    align-items: center;
    height: 19px;
    padding: 0 9px 0 2px;
    border-top: 1px solid #cfcfcf;
  }

  .doc-palette .grip {
    height: 10px;
    margin-right: 2px;
    border-left: 2px dotted #bbb;
  }

  .swatches {
    display: flex;
  }

  .swatch {
    width: 18px;
    height: 18px;
    border: 1px solid #555;
    background: #fff;
  }

  .black {
    background: #000;
  }

  /* Object manager */
  .docker {
    display: flex;
    flex: none;
    flex-direction: column;
    width: 36%;
    max-width: 592px;
    border-left: 3px solid #e3e3e3;
  }

  .docker-title {
    display: flex;
    flex: none;
    height: 20px;
    padding: 2px 2px 0 4px;
    border-bottom: 1px solid #bdbdbd;
    background: #e9e9e9;
  }

  .docker-title span {
    flex: 1;
  }

  .docker-body {
    display: flex;
    flex: 1;
    min-height: 0;
  }

  .manager {
    display: flex;
    flex: 1;
    flex-direction: column;
    min-width: 0;
    padding: 0 6px;
  }

  .manager-head {
    display: flex;
    flex: none;
    align-items: center;
    gap: 4px;
    height: 37px;
  }

  .active-layer {
    flex: 1;
    padding-left: 11px;
    line-height: 15px;
  }

  .object-list {
    display: grid;
    flex: 1;
    grid-template-columns: 1fr 17px;
    grid-template-rows: 1fr 17px;
    min-height: 0;
    border: 1px solid #666;
    background: #fff;
  }

  ul {
    min-width: 0;
    margin: 0;
    padding: 0;
    overflow: hidden;
    list-style: none;
  }

  li {
    position: relative;
    height: 18px;
    line-height: 18px;
    white-space: pre;
  }

  .master {
    border-top: 1px solid #b5c4d2;
    background: #d7e4f2;
    font-weight: bold;
  }

  .mark {
    position: absolute;
    z-index: 1;
    top: 14px;
    left: 408px;
    width: 120px;
    height: 26px;
  }

  .mark path {
    fill: none;
    stroke: #f00;
    stroke-width: 12px;
    stroke-linecap: round;
    stroke-linejoin: round;
  }

  .object-list .scroll-y {
    width: 17px;
  }

  .object-list .scroll-y .thumb {
    flex: 0 0 34%;
    margin-top: auto;
    margin-bottom: 27px;
  }

  .object-list .scroll-x .thumb {
    margin-left: 77px;
  }

  .manager-foot {
    display: flex;
    flex: none;
    gap: 6px;
    height: 35px;
    padding: 5px 7px 0 0;
  }

  .docker-tabs {
    display: flex;
    flex: none;
    flex-direction: column;
    align-items: center;
    gap: 15px;
    width: 21px;
    border-left: 2px solid #00a2f5;
    background: #e9e9e9;
  }

  .docker-tab {
    display: flex;
    flex: none;
    flex-direction: column;
    align-items: center;
    justify-content: flex-start;
    gap: 5px;
    width: 19px;
    height: 146px;
    padding-top: 3px;
    background: #cce0ff;
    font: 11px/16px "DejaVu Sans", sans-serif;
  }

  .docker-tab span {
    writing-mode: vertical-rl;
  }

  /* Colour palette */
  .palette {
    display: flex;
    flex: none;
    flex-direction: column;
    width: 30px;
    padding-left: 1px;
    overflow: hidden;
  }

  .palette > .icon {
    margin-left: 8px;
  }

  .palette-grip {
    flex: none;
    margin: 3px 0 0 2px;
    border-top: 2px dotted #bbb;
  }

  .columns {
    display: flex;
    width: 36px;
    border-top: 1px solid #555;
    border-left: 1px solid #555;
  }

  .column {
    display: flex;
    flex-direction: column;
  }

  .column button {
    width: 17px;
    height: 17px;
    border-right: 1px solid #555;
    border-bottom: 1px solid #555;
  }

  .palette-nav {
    display: flex;
    gap: 2px;
    padding-top: 3px;
  }

  /* Status bar */
  .status {
    display: flex;
    flex: none;
    align-items: center;
    height: 30px;
    padding: 3px 29px 0 3px;
    border-top: 1px solid #d0d0d0;
    white-space: nowrap;
  }

  .status-play {
    width: 14px;
    height: 14px;
    margin-left: 10px;
    border: 1px solid #000;
  }

  .status-play .icon {
    width: 12px;
    height: 12px;
  }

  .status-fill,
  .status-outline {
    display: flex;
    align-items: center;
    gap: 5px;
  }

  .status-fill {
    width: 205px;
    margin-left: auto;
  }

  .status-outline {
    padding-left: 5px;
    border-left: 1px solid #ddd;
  }

  .chip {
    width: 17px;
    height: 17px;
    border: 1px solid #555;
  }

  .chip .icon {
    width: 15px;
    height: 15px;
  }
</style>
